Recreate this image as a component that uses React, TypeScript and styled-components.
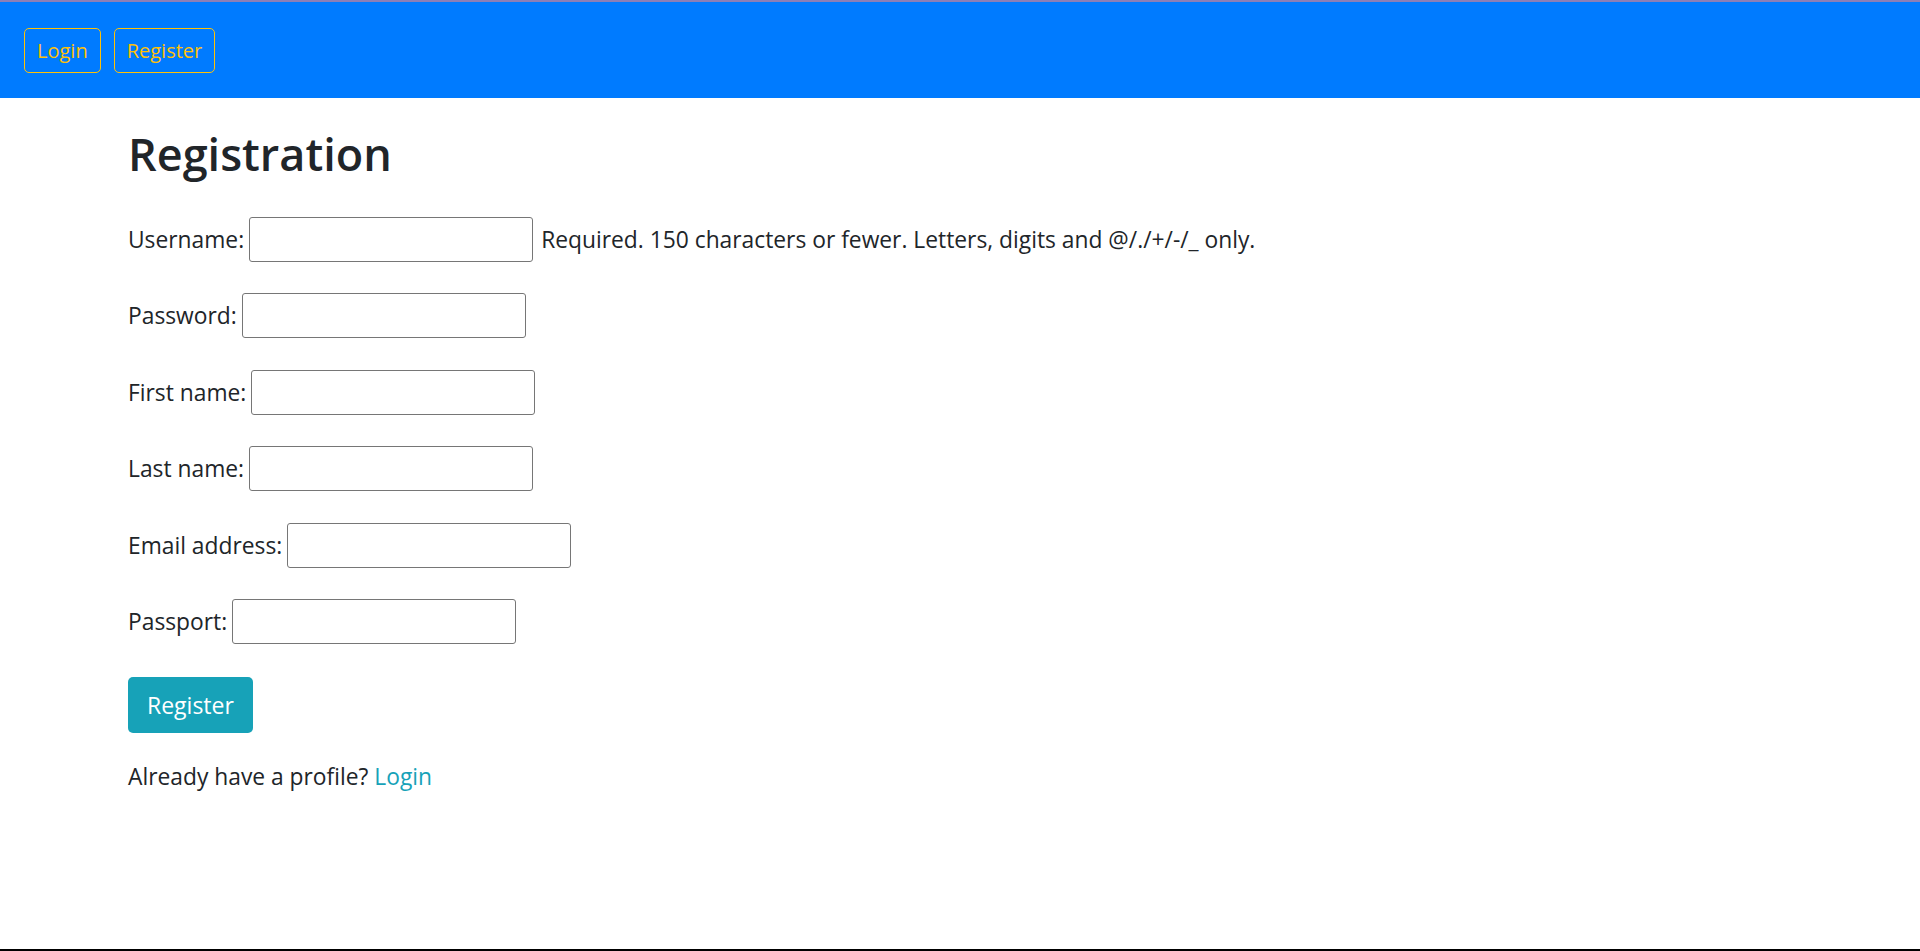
import React from "react";
import styled, { createGlobalStyle } from "styled-components";

const GlobalStyle = createGlobalStyle`
  * { box-sizing: border-box; }
  body {
    margin: 0;
    font-family: "Open Sans", "Noto Sans", sans-serif;
    font-size: 22.8px;
    color: #212529;
    background: #fff;
  }
`;

const Page = styled.div`
  min-height: 100vh;
  display: flex;
  flex-direction: column;
  border-bottom: 2px solid #000;
`;

const Navbar = styled.nav`
  height: 98px;
  background: #007bff;
  border-top: 2px solid #8c7fb6;
  display: flex;
  align-items: center;
  gap: 13px;
  padding: 0 24px;
`;

const NavButton = styled.a`
  height: 45px;
  display: inline-flex;
  align-items: center;
  padding: 0 12px;
  border: 1px solid #ffc107;
  border-radius: 5px;
  color: #ffc107;
  font-size: 20px;
  text-decoration: none;
  cursor: pointer;
`;

const Main = styled.main`
  padding: 0 128px;
`;

const Title = styled.h1`
  margin: 29px 0 35.5px;
  font-size: 45px;
  font-weight: 600;
  line-height: 1.2;
  color: #212529;
`;

const Form = styled.form`
  display: flex;
  flex-direction: column;
  gap: 31.6px;
`;

const Field = styled.div`
  display: flex;
  align-items: center;
  gap: 5px;
  height: 45px;
`;

const Label = styled.label`
  white-space: nowrap;
`;

const Input = styled.input`
  width: 284px;
  height: 45px;
  border: 1px solid #767676;
  border-radius: 3px;
  padding: 2px 4px;
  font-size: 18px;
  font-family: inherit;
  outline: none;
`;

const Help = styled.span`
  margin-left: 3px;
  white-space: nowrap;
`;

const SubmitButton = styled.button`
  align-self: flex-start;
  height: 56px;
  padding: 0 19px;
  margin-top: 0.6px;
  border: none;
  border-radius: 5px;
  background: #17a2b8;
  color: #fff;
  font-family: inherit;
  font-size: 23px;
  cursor: pointer;
`;

const Footer = styled.p`
  margin: 27px 0 0;
  line-height: 1.5;
`;

const Link = styled.a`
  color: #17a2b8;
  text-decoration: none;
`;

const fields = [
  { id: "username", label: "Username:", help: "Required. 150 characters or fewer. Letters, digits and @/./+/-/_ only." },
  { id: "password", label: "Password:", type: "password" },
  { id: "first_name", label: "First name:" },
  { id: "last_name", label: "Last name:" },
  { id: "email", label: "Email address:", type: "email" },
  { id: "passport", label: "Passport:" },
];

export default function App() {
  return (
    <Page>
      <GlobalStyle />
      <Navbar>
        <NavButton>Login</NavButton>
        <NavButton>Register</NavButton>
      </Navbar>
      <Main>
        <Title>Registration</Title>
        <Form onSubmit={(e) => e.preventDefault()}>
          {fields.map((f) => (
            <Field key={f.id}>
              <Label htmlFor={f.id}>{f.label}</Label>
              <Input id={f.id} type={f.type || "text"} />
              {f.help && <Help>{f.help}</Help>}
            </Field>
          ))}
          <SubmitButton type="submit">Register</SubmitButton>
        </Form>
        <Footer>
          Already have a profile? <Link>Login</Link>
        </Footer>
      </Main>
    </Page>
  );
}
